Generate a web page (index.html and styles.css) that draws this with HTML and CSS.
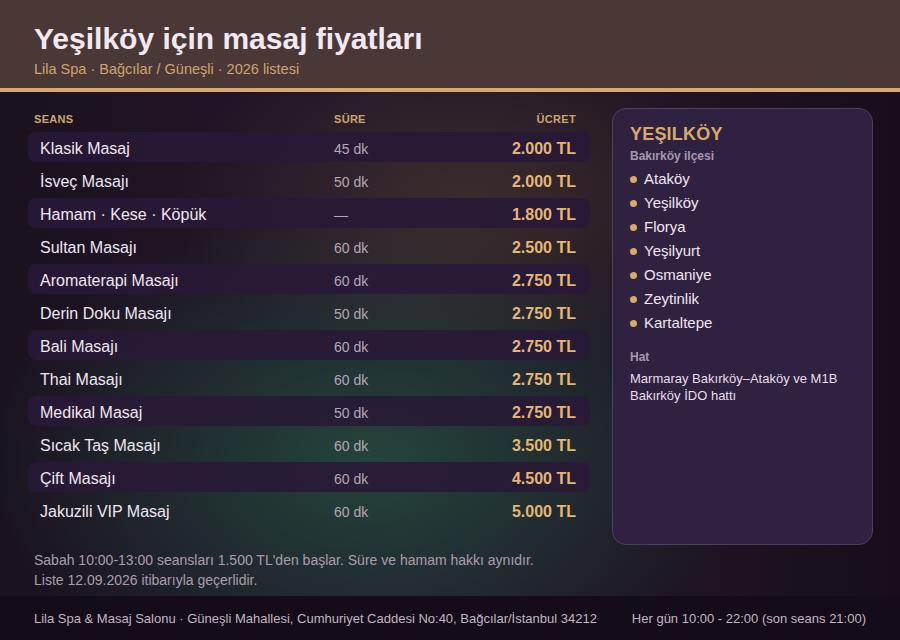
FILE: index.html
```html
<!DOCTYPE html>
<html lang="tr">
<head>
<meta charset="utf-8">
<title>Yeşilköy için masaj fiyatları</title>
<link rel="stylesheet" href="styles.css">
</head>
<body>
<header class="top">
  <h1 class="title">Yeşilköy için masaj fiyatları</h1>
  <p class="subtitle">Lila Spa · Bağcılar / Güneşli · 2026 listesi</p>
</header>
<main class="main">
  <section class="prices">
    <div class="thead">
      <span>Seans</span><span>Süre</span><span class="r">Ücret</span>
    </div>
    <div class="rows">
      <div class="row alt"><span class="name">Klasik Masaj</span><span class="dur">45 dk</span><span class="price">2.000 TL</span></div>
      <div class="row"><span class="name">İsveç Masajı</span><span class="dur">50 dk</span><span class="price">2.000 TL</span></div>
      <div class="row alt"><span class="name">Hamam · Kese · Köpük</span><span class="dur">—</span><span class="price">1.800 TL</span></div>
      <div class="row"><span class="name">Sultan Masajı</span><span class="dur">60 dk</span><span class="price">2.500 TL</span></div>
      <div class="row alt"><span class="name">Aromaterapi Masajı</span><span class="dur">60 dk</span><span class="price">2.750 TL</span></div>
      <div class="row"><span class="name">Derin Doku Masajı</span><span class="dur">50 dk</span><span class="price">2.750 TL</span></div>
      <div class="row alt"><span class="name">Bali Masajı</span><span class="dur">60 dk</span><span class="price">2.750 TL</span></div>
      <div class="row"><span class="name">Thai Masajı</span><span class="dur">60 dk</span><span class="price">2.750 TL</span></div>
      <div class="row alt"><span class="name">Medikal Masaj</span><span class="dur">50 dk</span><span class="price">2.750 TL</span></div>
      <div class="row"><span class="name">Sıcak Taş Masajı</span><span class="dur">60 dk</span><span class="price">3.500 TL</span></div>
      <div class="row alt"><span class="name">Çift Masajı</span><span class="dur">60 dk</span><span class="price">4.500 TL</span></div>
      <div class="row"><span class="name">Jakuzili VIP Masaj</span><span class="dur">60 dk</span><span class="price">5.000 TL</span></div>
    </div>
    <p class="note">Sabah 10:00-13:00 seansları 1.500 TL'den başlar. Süre ve hamam hakkı aynıdır.<br>Liste 12.09.2026 itibarıyla geçerlidir.</p>
  </section>
  <aside class="card">
    <h2 class="card-title">YEŞILKÖY</h2>
    <p class="card-sub">Bakırköy ilçesi</p>
    <ul class="areas">
      <li>Ataköy</li>
      <li>Yeşilköy</li>
      <li>Florya</li>
      <li>Yeşilyurt</li>
      <li>Osmaniye</li>
      <li>Zeytinlik</li>
      <li>Kartaltepe</li>
    </ul>
    <p class="card-label">Hat</p>
    <p class="card-text">Marmaray Bakırköy–Ataköy ve M1B<br>Bakırköy İDO hattı</p>
  </aside>
</main>
<footer class="foot">
  <span>Lila Spa &amp; Masaj Salonu · Güneşli Mahallesi, Cumhuriyet Caddesi No:40, Bağcılar/İstanbul 34212</span>
  <span>Her gün 10:00 - 22:00 (son seans 21:00)</span>
</footer>
</body>
</html>
```

FILE: styles.css
```css
* { box-sizing: border-box; }
html, body { margin: 0; padding: 0; }
body {
  width: 900px;
  height: 640px;
  overflow: hidden;
  display: flex;
  flex-direction: column;
  font-family: "Liberation Sans", Arial, sans-serif;
  color: #eee5ef;
  background:
    radial-gradient(ellipse 380px 250px at 370px 460px, rgba(36, 88, 66, 0.7), rgba(36, 88, 66, 0) 100%),
    radial-gradient(ellipse 300px 170px at 470px 200px, rgba(92, 70, 48, 0.45), rgba(92, 70, 48, 0) 100%),
    linear-gradient(90deg, #1b1220 0%, #22172a 45%, #1d1322 80%, #170e1a 100%);
}
.top {
  height: 92px;
  flex: none;
  background: #4a3836;
  border-bottom: 4px solid #d8a96e;
  padding: 22px 34px 0;
}
.title {
  margin: 0;
  font-size: 30px;
  line-height: 34px;
  font-weight: 700;
  color: #f2e8f3;
}
.subtitle {
  margin: 4px 0 0;
  font-size: 14.5px;
  line-height: 18px;
  color: #cfa46c;
}
.main {
  flex: 1;
  display: flex;
  gap: 22px;
  padding: 16px 27px 0 28px;
}
.prices {
  flex: 1;
  display: flex;
  flex-direction: column;
}
.thead {
  display: grid;
  grid-template-columns: 1fr 120px 122px;
  height: 20px;
  margin-bottom: 4px;
  padding: 2px 14px 0 6px;
  align-items: center;
  font-size: 11px;
  font-weight: 700;
  letter-spacing: 0.3px;
  text-transform: uppercase;
  color: #cfa46c;
}
.r { text-align: right; }
.rows {
  display: flex;
  flex-direction: column;
  gap: 3px;
}
.row {
  display: grid;
  grid-template-columns: 1fr 120px 122px;
  align-items: center;
  height: 30px;
  padding: 3px 14px 0 12px;
  border-radius: 8px;
}
.row.alt { background: rgba(40, 25, 54, 0.9); }
.name { font-size: 16px; color: #efe6f0; }
.dur { font-size: 14px; color: #b3a7b8; }
.price { font-size: 16px; font-weight: 700; color: #e5b676; text-align: right; }
.note {
  margin: 25px 0 0 6px;
  font-size: 14px;
  line-height: 20px;
  color: #aa9eab;
}
.card {
  flex: none;
  width: 261px;
  height: 437px;
  background: #2f2140;
  border: 1px solid #4d3e62;
  border-radius: 14px;
  padding: 14px 17px;
}
.card-title {
  margin: 0;
  font-size: 18px;
  line-height: 22px;
  font-weight: 700;
  color: #d9a96c;
  letter-spacing: 0.2px;
}
.card-sub {
  margin: 3px 0 0;
  font-size: 12px;
  line-height: 16px;
  font-weight: 700;
  color: #a898b2;
}
.areas {
  list-style: none;
  margin: 2px 0 0;
  padding: 0;
}
.areas li {
  display: flex;
  align-items: center;
  height: 24px;
  font-size: 15px;
  color: #efe6f0;
}
.areas li::before {
  content: "";
  width: 7px;
  height: 7px;
  border-radius: 50%;
  background: #d9a96c;
  margin: 2px 7px 0 0;
}
.card-label {
  margin: 15px 0 0;
  font-size: 12px;
  line-height: 16px;
  font-weight: 700;
  color: #a898b2;
}
.card-text {
  margin: 5px 0 0;
  font-size: 13px;
  line-height: 17px;
  color: #e8dfea;
}
.foot {
  flex: none;
  height: 44px;
  background: #140c18;
  display: flex;
  justify-content: space-between;
  align-items: center;
  padding: 0 34px;
  font-size: 13px;
  color: #c2b6c4;
}
```
